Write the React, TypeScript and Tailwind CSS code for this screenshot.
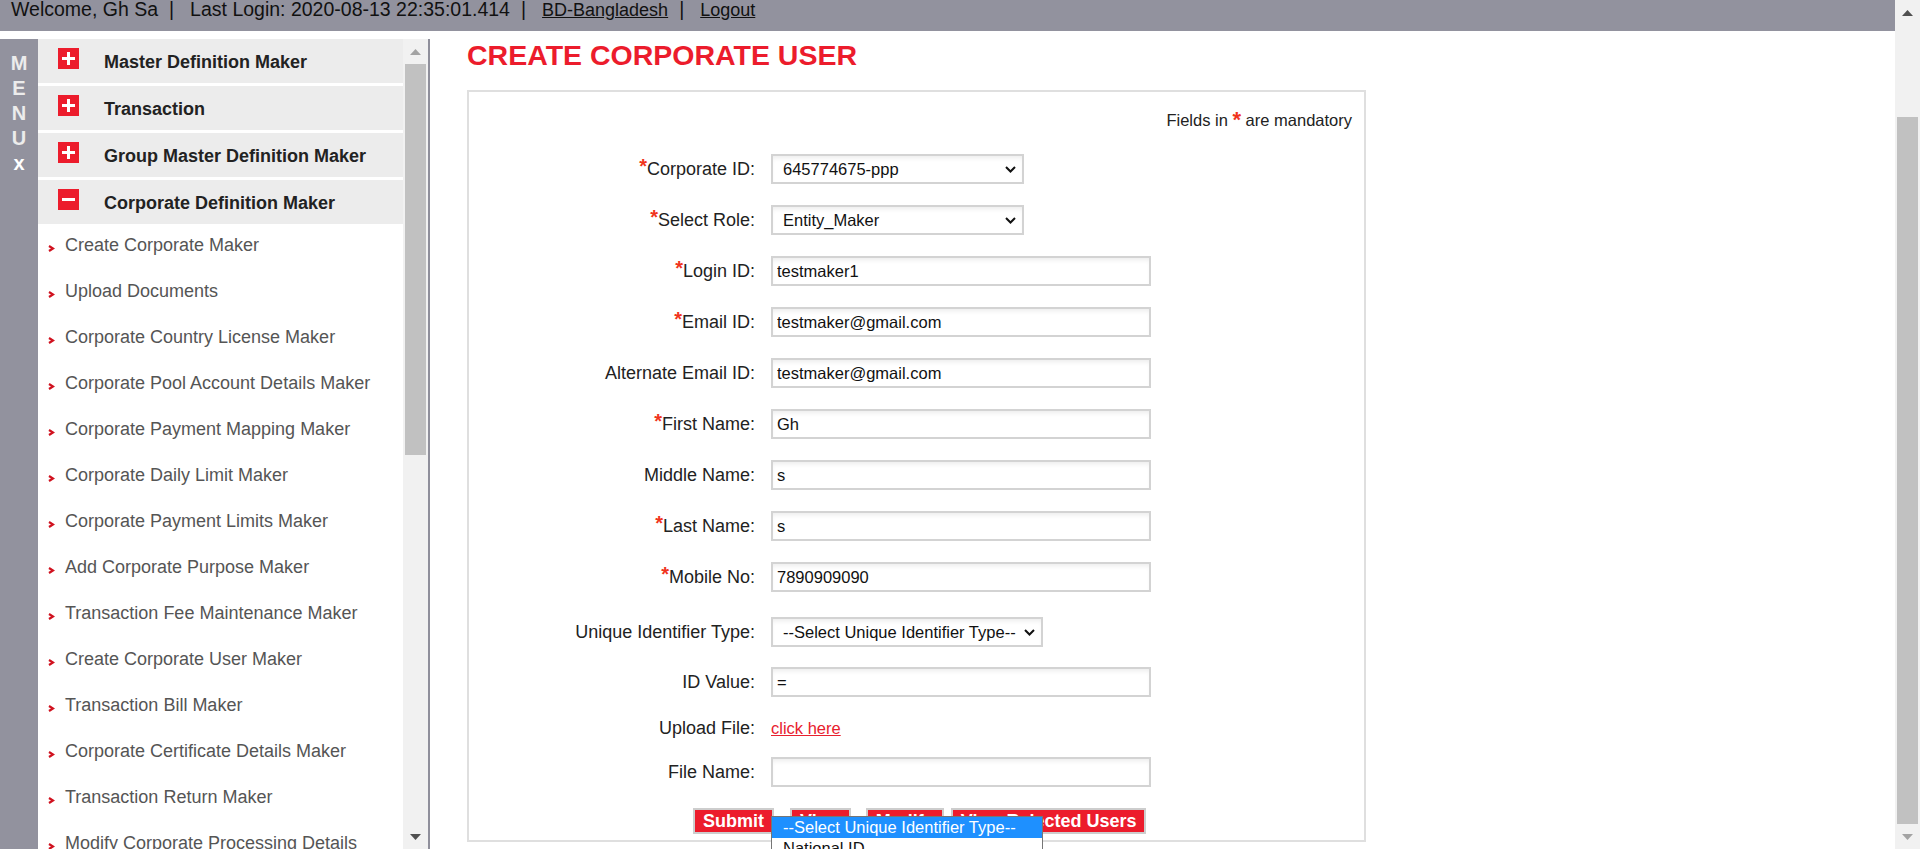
import type { ReactNode } from 'react';

const sections = [
  { title: 'Master Definition Maker', open: false },
  { title: 'Transaction', open: false },
  { title: 'Group Master Definition Maker', open: false },
  { title: 'Corporate Definition Maker', open: true },
];

const subItems = [
  'Create Corporate Maker',
  'Upload Documents',
  'Corporate Country License Maker',
  'Corporate Pool Account Details Maker',
  'Corporate Payment Mapping Maker',
  'Corporate Daily Limit Maker',
  'Corporate Payment Limits Maker',
  'Add Corporate Purpose Maker',
  'Transaction Fee Maintenance Maker',
  'Create Corporate User Maker',
  'Transaction Bill Maker',
  'Corporate Certificate Details Maker',
  'Transaction Return Maker',
  'Modify Corporate Processing Details',
];

function Sep() {
  return <span className="ml-[11px] mr-[16px]">|</span>;
}

function ToggleIcon({ open }: { open: boolean }) {
  return (
    <svg width="21" height="21" viewBox="0 0 21 21" className="ml-[20px] mt-[9px] shrink-0">
      <rect width="21" height="21" fill="#ec1c2c" />
      <rect x="4" y="9" width="13" height="3" fill="#fff" />
      {!open && <rect x="9" y="4" width="3" height="13" fill="#fff" />}
    </svg>
  );
}

function Bullet() {
  return (
    <svg width="7" height="7" viewBox="0 0 7 7" className="ml-[10px] mt-[10px] shrink-0">
      <path d="M1 1 L5 3.5 L1 6" fill="none" stroke="#d0121f" strokeWidth="2.2" />
    </svg>
  );
}

function Arrow({ up, color }: { up: boolean; color: string }) {
  return (
    <svg width="11" height="6" viewBox="0 0 11 6">
      <path d={up ? 'M0 6 L5.5 0 L11 6 Z' : 'M0 0 L5.5 6 L11 0 Z'} fill={color} />
    </svg>
  );
}

function Chevron() {
  return (
    <svg width="11" height="7" viewBox="0 0 11 7">
      <path d="M1 1 L5.5 5.5 L10 1" fill="none" stroke="#111" strokeWidth="2" />
    </svg>
  );
}

function Star() {
  return <span className="align-[2px] text-[20px] font-bold leading-none text-[#f0341c]">*</span>;
}

function Row({
  label,
  req,
  className,
  children,
}: {
  label: string;
  req?: boolean;
  className: string;
  children: ReactNode;
}) {
  return (
    <div className={`flex h-[30px] items-center ${className}`}>
      <div className="w-[286px] text-right text-[18px] text-[#222]">
        {req && <Star />}
        {label}
      </div>
      <div className="ml-[16px] flex">{children}</div>
    </div>
  );
}

function TextBox({ value }: { value: string }) {
  return (
    <input
      readOnly
      value={value}
      className="h-[30px] w-[380px] border-2 border-[#d3d3d3] bg-white pl-[4px] text-[16.5px] text-[#111] shadow-[inset_0_4px_5px_-2px_rgba(0,0,0,0.08)] outline-none"
    />
  );
}

function SelectBox({ value, width }: { value: string; width: string }) {
  return (
    <div
      className={`flex h-[30px] items-center justify-between border-2 border-[#d3d3d3] bg-white pl-[10px] pr-[6px] text-[16.5px] text-[#111] shadow-[inset_0_4px_5px_-2px_rgba(0,0,0,0.08)] ${width}`}
    >
      <span>{value}</span>
      <Chevron />
    </div>
  );
}

function Btn({ children, className }: { children: ReactNode; className?: string }) {
  return (
    <button
      className={`h-[26px] border-2 border-[#cdcdcd] bg-[#ec1c2c] px-[8px] text-[18px] font-bold leading-[20px] text-white ${className ?? ''}`}
    >
      {children}
    </button>
  );
}

function Sidebar() {
  return (
    <aside className="mt-[8px] flex w-[430px] shrink-0 border-r-2 border-[#8f8f9b]">
      {/* MENU strip */}
      <div className="flex w-[38px] shrink-0 flex-col items-center bg-[#92929e] pt-[12px] text-[20px] font-bold leading-[25px] text-[#ececec]">
        <span>M</span>
        <span>E</span>
        <span>N</span>
        <span>U</span>
        <span className="text-white">x</span>
      </div>

      <div className="w-[365px] shrink-0 overflow-hidden">
        {sections.map((s) => (
          <div key={s.title} className="mb-[3px] flex h-[44px] items-start bg-[#ececec]">
            <ToggleIcon open={s.open} />
            <span className="ml-[25px] mt-[13px] whitespace-nowrap text-[18px] font-bold leading-[21px] text-[#222]">
              {s.title}
            </span>
          </div>
        ))}
        {subItems.map((item) => (
          <div key={item} className="flex h-[46px] items-start pt-[8px]">
            <Bullet />
            <span className="ml-[10px] whitespace-nowrap text-[18px] leading-[21px] text-[#555]">{item}</span>
          </div>
        ))}
      </div>

      {/* sidebar scrollbar */}
      <div className="flex w-[25px] shrink-0 flex-col bg-[#f1f1f1]">
        <div className="flex h-[25px] items-center justify-center">
          <Arrow up color="#a3a3a3" />
        </div>
        <div className="mx-[2px] h-[391px] bg-[#c1c1c1]" />
        <div className="flex-1" />
        <div className="flex h-[25px] items-center justify-center">
          <Arrow up={false} color="#505050" />
        </div>
      </div>
    </aside>
  );
}

export default function App() {
  return (
    <div className="flex h-[849px] w-[1920px] overflow-hidden bg-white font-['Liberation_Sans',Arial,sans-serif] text-[#222]">
      <div className="flex min-w-0 flex-1 flex-col">
        {/* Header */}
        <header className="h-[31px] shrink-0 whitespace-nowrap bg-[#92929e] pl-[11px] text-[19.5px] leading-[19px] text-[#111]">
          <span>Welcome, Gh Sa</span>
          <Sep />
          <span>Last Login: 2020-08-13 22:35:01.414</span>
          <Sep />
          <a className="text-[18px] underline">BD-Bangladesh</a>
          <Sep />
          <a className="text-[18px] underline">Logout</a>
        </header>

        <div className="flex min-h-0 flex-1">
          <Sidebar />

          {/* Main */}
          <main className="flex-1 pl-[37px] pt-[8px]">
            <h1 className="text-[28.5px] font-bold leading-[32px] text-[#ec1c2c]">CREATE CORPORATE USER</h1>

            <div className="mt-[19px] w-[899px] border-2 border-[#dfdfdf] pb-[6px]">
              <div className="mt-[16px] flex h-[24px] items-center justify-end pr-[12px] text-[16.5px] text-[#222]">
                Fields in&nbsp;<span className="text-[22px] font-bold leading-none text-[#f0341c]">*</span>&nbsp;are mandatory
              </div>

              <Row label="Corporate ID:" req className="mt-[22px]">
                <SelectBox value="645774675-ppp" width="w-[253px]" />
              </Row>
              <Row label="Select Role:" req className="mt-[21px]">
                <SelectBox value="Entity_Maker" width="w-[253px]" />
              </Row>
              <Row label="Login ID:" req className="mt-[21px]">
                <TextBox value="testmaker1" />
              </Row>
              <Row label="Email ID:" req className="mt-[21px]">
                <TextBox value="testmaker@gmail.com" />
              </Row>
              <Row label="Alternate Email ID:" className="mt-[21px]">
                <TextBox value="testmaker@gmail.com" />
              </Row>
              <Row label="First Name:" req className="mt-[21px]">
                <TextBox value="Gh" />
              </Row>
              <Row label="Middle Name:" className="mt-[21px]">
                <TextBox value="s" />
              </Row>
              <Row label="Last Name:" req className="mt-[21px]">
                <TextBox value="s" />
              </Row>
              <Row label="Mobile No:" req className="mt-[21px]">
                <TextBox value="7890909090" />
              </Row>
              <Row label="Unique Identifier Type:" className="mt-[25px]">
                <SelectBox value="--Select Unique Identifier Type--" width="w-[272px]" />
              </Row>
              <Row label="ID Value:" className="mt-[20px]">
                <TextBox value="=" />
              </Row>
              <Row label="Upload File:" className="mt-[16px]">
                <a className="text-[16.5px] text-[#e8202e] underline">click here</a>
              </Row>
              <Row label="File Name:" className="mt-[14px]">
                <TextBox value="" />
              </Row>

              <div className="relative ml-[224px] mt-[21px] flex h-[26px]">
                <Btn>Submit</Btn>
                <Btn className="ml-[16px]">View</Btn>
                <Btn className="ml-[15px]">Modify</Btn>
                <Btn className="ml-[7px]">View Rejected Users</Btn>

                {/* open dropdown list */}
                <div className="absolute left-[78px] top-[8px] w-[272px] border border-[#767676] bg-white text-[16.5px]">
                  <div className="bg-[#1e90ff] pl-[11px] leading-[21px] text-white">--Select Unique Identifier Type--</div>
                  <div className="pl-[11px] leading-[21px] text-[#111]">National ID</div>
                  <div className="pl-[11px] leading-[21px] text-[#111]">Passport</div>
                </div>
              </div>
            </div>
          </main>
        </div>
      </div>

      {/* page scrollbar */}
      <div className="flex w-[25px] shrink-0 flex-col bg-[#f1f1f1]">
        <div className="flex h-[25px] items-center justify-center">
          <Arrow up color="#505050" />
        </div>
        <div className="h-[92px]" />
        <div className="mx-[2px] h-[707px] bg-[#c1c1c1]" />
        <div className="flex h-[25px] items-center justify-center">
          <Arrow up={false} color="#a3a3a3" />
        </div>
      </div>
    </div>
  );
}
